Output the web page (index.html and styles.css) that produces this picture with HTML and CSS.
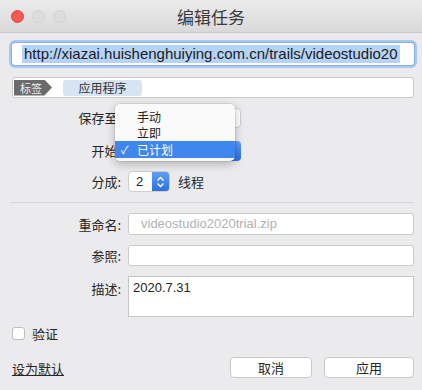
FILE: index.html
```html
<!DOCTYPE html>
<html lang="zh-CN">
<head>
    <meta charset="UTF-8">
    <meta name="viewport" content="width=device-width, initial-scale=1.0">
    <title>编辑任务</title>
    <link rel="stylesheet" href="styles.css">
</head>
<body>

    <div class="window">
        <div class="titlebar">
            <div class="lights">
                <span class="light red"></span>
                <span class="light"></span>
                <span class="light"></span>
            </div>
            <h1>编辑任务</h1>
        </div>

        <div class="content">
            <div class="url-field"><span class="selected">http://xiazai.huishenghuiying.com.cn/trails/videostudio20</span></div>

            <div class="tag-field">
                <span class="tag">标签</span>
                <span class="chip">应用程序</span>
            </div>

            <div class="form-top">
                <div class="row popup-row">
                    <span class="label">保存至:</span>
                    <div class="popup"><span class="arrows grey"></span></div>
                </div>
                <div class="row popup-row second">
                    <span class="label">开始:</span>
                    <div class="popup"><span class="arrows blue"></span></div>
                </div>
                <div class="row split-row">
                    <span class="label">分成:</span>
                    <div class="stepper">
                        <span class="num">2</span>
                        <span class="step-btn">
                            <svg width="9" height="12" viewBox="0 0 9 12"><path d="M1.5 4.5 L4.5 1.5 L7.5 4.5 M1.5 7.5 L4.5 10.5 L7.5 7.5" fill="none" stroke="#fff" stroke-width="1.4"/></svg>
                        </span>
                    </div>
                    <span class="unit">线程</span>
                </div>
            </div>

            <div class="separator"></div>

            <div class="form-bottom">
                <div class="row">
                    <span class="label">重命名:</span>
                    <div class="text-field placeholder">videostudio2020trial.zip</div>
                </div>
                <div class="row">
                    <span class="label">参照:</span>
                    <div class="text-field"></div>
                </div>
                <div class="row desc-row">
                    <span class="label">描述:</span>
                    <div class="text-area">2020.7.31</div>
                </div>
            </div>

            <label class="check-row">
                <span class="checkbox"></span>
                <span>验证</span>
            </label>

            <div class="footer">
                <a class="default-link">设为默认</a>
                <div class="buttons">
                    <button class="btn cancel">取消</button>
                    <button class="btn apply">应用</button>
                </div>
            </div>
        </div>

        <div class="menu">
            <div class="menu-item">手动</div>
            <div class="menu-item">立即</div>
            <div class="menu-item active"><span class="check">✓</span>已计划</div>
        </div>
    </div>

</body>
</html>
```

FILE: styles.css
```css
body {
    margin: 0;
    font-family: "Liberation Sans", "Noto Sans CJK SC", sans-serif;
    font-size: 13px;
    color: #262626;
    background-color: #ebebed;
}
.window {
    position: relative;
    width: 422px;
    height: 390px;
    overflow: hidden;
    background-color: #ebebed;
}
.titlebar {
    height: 32px;
    border-bottom: 1px solid #c9c9c9;
    background: linear-gradient(#ececec, #d9d9d9);
    display: flex;
    align-items: center;
    justify-content: center;
    position: relative;
}
.titlebar h1 {
    margin: 0;
    font-size: 17px;
    font-weight: normal;
    color: #3a3a3a;
    font-family: "Noto Sans CJK SC", sans-serif;
}
.lights {
    position: absolute;
    left: 11px;
    top: 10px;
    display: flex;
    gap: 8px;
}
.light {
    width: 11px;
    height: 11px;
    border-radius: 50%;
    background-color: #dddddd;
    border: 1px solid #d1d1d1;
}
.light.red {
    background-color: #f25a52;
    border-color: #e0443e;
}
.content {
    padding: 10px 8px 0 12px;
}
.url-field {
    height: 22px;
    box-sizing: border-box;
    background: white;
    border-radius: 3px;
    box-shadow: 0 0 0 1px #89aee6, 0 0 0 3px #a9c8f3;
    display: flex;
    align-items: center;
    padding-left: 10px;
    overflow: hidden;
    white-space: nowrap;
}
.url-field .selected {
    background-color: #b5d3f7;
    font-size: 15px;
    line-height: 18px;
    padding: 0 2px;
    color: #1a1a1a;
    font-family: "Liberation Sans", sans-serif;
}
.tag-field {
    margin-top: 12px;
    height: 21px;
    box-sizing: border-box;
    background: white;
    border: 1px solid #c9c9c9;
    border-radius: 3px;
    display: flex;
    align-items: center;
    padding-left: 1px;
}
.tag {
    background-color: #6b6b6b;
    color: #eeeeee;
    font-size: 11px;
    height: 16px;
    line-height: 16px;
    padding: 0 8px 0 6px;
    clip-path: polygon(0 0, 80% 0, 100% 50%, 80% 100%, 0 100%);
    width: 24px;
    font-family: "Noto Sans CJK SC", sans-serif;
}
.chip {
    margin-left: 11px;
    background-color: #d6e4f4;
    border-radius: 3px;
    height: 16px;
    line-height: 16px;
    width: 79px;
    text-align: center;
    font-size: 12px;
    color: #333;
    font-family: "Noto Sans CJK SC", sans-serif;
}
.row {
    display: flex;
    align-items: center;
}
.label {
    width: 109px;
    text-align: right;
    padding-right: 7px;
    font-family: "Noto Sans CJK SC", sans-serif;
}
.form-top {
    padding-top: 9px;
}
.popup-row {
    height: 21px;
}
.popup-row.second {
    margin-top: 12px;
}
.popup {
    width: 113px;
    height: 20px;
    box-sizing: border-box;
    background: white;
    border: 1px solid #cfcfcf;
    border-radius: 4px;
    position: relative;
}
.arrows {
    position: absolute;
    right: -1px;
    top: -1px;
    width: 16px;
    height: 20px;
    border-radius: 0 4px 4px 0;
}
.arrows.blue {
    background: linear-gradient(#5ea0f7, #2b6fdc);
}
.split-row {
    margin-top: 10px;
    height: 21px;
}
.stepper {
    display: flex;
    height: 21px;
    width: 42px;
    box-sizing: border-box;
    border: 1px solid #cfcfcf;
    border-radius: 4px;
    overflow: hidden;
    background: white;
}
.stepper .num {
    flex: 1;
    padding-left: 7px;
    line-height: 19px;
    font-size: 13px;
}
.step-btn {
    width: 17px;
    background: linear-gradient(#5ea0f7, #2b6fdc);
    display: flex;
    align-items: center;
    justify-content: center;
}
.unit {
    margin-left: 8px;
    font-family: "Noto Sans CJK SC", sans-serif;
}
.separator {
    margin: 10px 0 0 -2px;
    height: 1px;
    background-color: #d6d6d6;
}
.form-bottom {
    padding-top: 10px;
}
.form-bottom .row {
    margin-bottom: 10px;
}
.text-field {
    flex: 1;
    height: 22px;
    box-sizing: border-box;
    background: white;
    border: 1px solid #cbcbcb;
    border-radius: 3px;
    padding-left: 12px;
    line-height: 20px;
}
.form-bottom .row:nth-child(2) .text-field {
    height: 21px;
}
.placeholder {
    color: #b3b3b3;
}
.desc-row {
    align-items: flex-start;
}
.desc-row .label {
    padding-top: 3px;
}
.text-area {
    flex: 1;
    height: 41px;
    box-sizing: border-box;
    background: white;
    border: 1px solid #c6c6c6;
    padding: 3px 4px;
    font-size: 13px;
}
.check-row {
    display: flex;
    align-items: center;
    gap: 7px;
    margin-top: -1px;
    height: 15px;
    font-family: "Noto Sans CJK SC", sans-serif;
}
.checkbox {
    width: 13px;
    height: 13px;
    box-sizing: border-box;
    background: white;
    border: 1px solid #bdbdbd;
    border-radius: 3px;
}
.footer {
    margin-top: 15px;
    display: flex;
    align-items: center;
    justify-content: space-between;
}
.default-link {
    text-decoration: underline;
    font-family: "Noto Sans CJK SC", sans-serif;
    margin-top: 3px;
}
.buttons {
    display: flex;
    gap: 12px;
}
.btn {
    height: 21px;
    background: white;
    border: 1px solid #c8c8c8;
    border-radius: 4px;
    font-family: "Noto Sans CJK SC", sans-serif;
    font-size: 13px;
    color: #262626;
    padding: 0;
}
.btn.cancel {
    width: 82px;
}
.btn.apply {
    width: 90px;
}
.menu {
    position: absolute;
    left: 115px;
    top: 104px;
    width: 120px;
    padding: 5px 0 3px;
    background: rgba(250, 250, 250, 0.98);
    border-radius: 5px;
    box-shadow: 0 3px 10px rgba(0, 0, 0, 0.25), 0 0 0 0.5px rgba(0, 0, 0, 0.15);
    font-family: "Noto Sans CJK SC", sans-serif;
}
.menu-item {
    height: 16px;
    line-height: 16px;
    padding-left: 22px;
    font-size: 12px;
    color: #222;
    position: relative;
}
.menu-item.active {
    background-color: #3f87ee;
    color: white;
    height: 17px;
    line-height: 17px;
}
.menu-item .check {
    position: absolute;
    left: 6px;
    font-size: 11px;
}
```
